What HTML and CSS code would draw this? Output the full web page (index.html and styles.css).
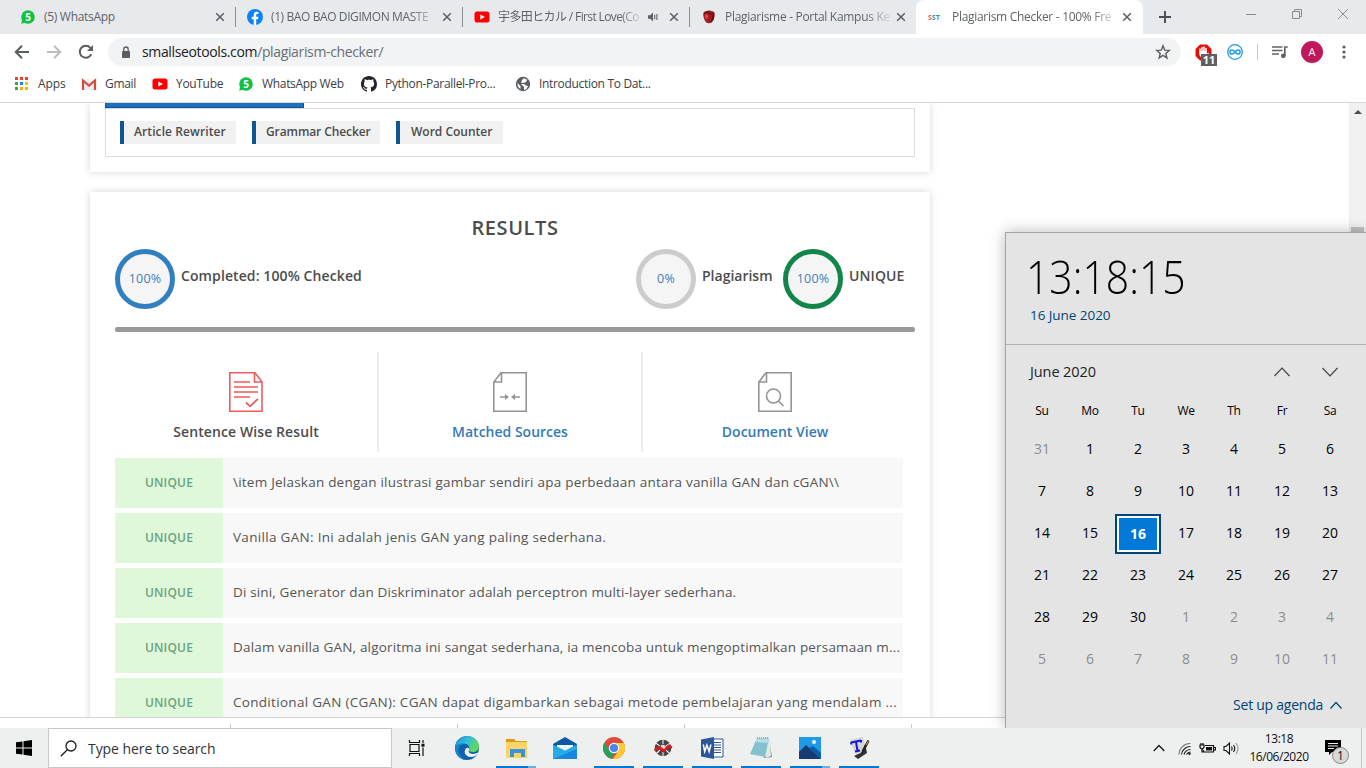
FILE: index.html
```html
<!DOCTYPE html>
<html lang="en">
<head>
<meta charset="utf-8">
<title>Plagiarism Checker - 100% Free</title>
<link rel="stylesheet" href="styles.css">
</head>
<body>
<div class="screen">
  <header class="tabstrip">
    <div class="tab">
      <svg class="fav" viewBox="0 0 16 16"><circle cx="8" cy="8" r="6.8" fill="#10c143"/><path d="M1.2 14.8l.9-4 3 3z" fill="#10c143"/><text x="8" y="12" text-anchor="middle" class="five">5</text></svg>
      <span class="tab-title whole">(5) WhatsApp</span>
      <svg class="close" viewBox="0 0 10 10"><path d="M1.2 1.2l7.6 7.6M8.8 1.2L1.2 8.8"/></svg>
    </div>
    <div class="tab">
      <svg class="fav" viewBox="0 0 16 16"><circle cx="8" cy="8" r="8" fill="#0a83f5"/><path d="M6.7 16v-5.8H4.7V7.7h2V6c0-2.1 1.2-3.2 3.1-3.2l1.7.15v2h-1c-1 0-1.3.6-1.3 1.2v1.5h2.2l-.4 2.5H9.2V16z" fill="#fff"/></svg>
      <span class="tab-title t2">(1) BAO BAO DIGIMON MASTE</span>
      <svg class="close" viewBox="0 0 10 10"><path d="M1.2 1.2l7.6 7.6M8.8 1.2L1.2 8.8"/></svg>
    </div>
    <div class="tab">
      <svg class="fav" viewBox="0 0 16 16"><rect x=".5" y="2.5" width="15" height="11" rx="2.5" fill="#f00"/><path d="M6.3 5.4v5.2L10.9 8z" fill="#fff"/></svg>
      <span class="tab-title t3">宇多田ヒカル / First Love(Co</span>
      <svg class="audio" viewBox="0 0 12 12"><path d="M1 4.2h2.2L6 1.6v8.8L3.200 7.800H1z" fill="#5f6368"/><path d="M7.700 3.800v4.400M9.900 3v6" stroke="#5f6368" stroke-width="1.100" fill="none"/></svg>
      <svg class="close" viewBox="0 0 10 10"><path d="M1.2 1.2l7.6 7.6M8.8 1.2L1.2 8.8"/></svg>
    </div>
    <div class="tab last">
      <svg class="fav" viewBox="0 0 16 16"><path d="M2.500 3.500C4 1 12 1 13.500 3.500c.8 3-.3 7-2.500 9.800-2 1.200-4 1.200-6 0C2.800 10.500 1.700 6.500 2.500 3.500z" fill="#a31c22"/><path d="M3 4.500c2-1.500 4-1 5 0s3.500 1 5-.5" stroke="#4b1013" fill="none"/><ellipse cx="5.500" cy="7.500" rx="1.600" ry="2.200" fill="#d9484b"/><path d="M12 6c.5 2-.3 5-2 6.800" stroke="#5e1015" stroke-width="1.500" fill="none"/><path d="M8 5V1.500" stroke="#5a1a12" stroke-width="1.200"/></svg>
      <span class="tab-title t4">Plagiarisme - Portal Kampus Ke</span>
      <svg class="close" viewBox="0 0 10 10"><path d="M1.2 1.2l7.6 7.6M8.8 1.2L1.2 8.8"/></svg>
    </div>
    <div class="tab active">
      <span class="fav sst"><b class="s1">S</b><b class="s2">S</b><b class="s3">T</b></span>
      <span class="tab-title t5">Plagiarism Checker - 100% Fre</span>
      <svg class="close" viewBox="0 0 10 10"><path d="M1.2 1.2l7.6 7.6M8.8 1.2L1.2 8.8"/></svg>
    </div>
    <svg class="newtab" viewBox="0 0 12 12"><path d="M6 0v12M0 6h12" stroke="#4a4d51" stroke-width="1.900"/></svg>
    <div class="winbtns">
      <svg width="12" height="12" viewBox="0 0 12 12"><path d="M1 6.500h10"/></svg>
      <svg width="12" height="12" viewBox="0 0 12 12"><path d="M1.500 3.500h7v7h-7zM3.500 3.500v-2h7v7h-2"/></svg>
      <svg width="12" height="12" viewBox="0 0 12 12"><path d="M1 1l10 10M11 1L1 11"/></svg>
    </div>
  </header>

  <div class="toolbar">
    <div class="nav">
      <svg width="16" height="16" viewBox="0 0 16 16"><path d="M15 8H2M8 1.800L1.800 8 8 14.200" stroke="#5a5d61" stroke-width="2" fill="none"/></svg>
      <svg width="16" height="16" viewBox="0 0 16 16"><path d="M1 8h13M8 1.800L14.200 8 8 14.200" stroke="#bcbec0" stroke-width="2" fill="none"/></svg>
      <svg width="16" height="16" viewBox="0 0 16 16"><path d="M13.300 10.200A6 6 0 1 1 12.400 3.800" stroke="#5a5d61" stroke-width="2" fill="none"/><path d="M15 1v6H9z" fill="#5a5d61"/></svg>
    </div>
    <div class="omnibox">
      <svg class="lock" width="10" height="13" viewBox="0 0 10 13"><rect x="1" y="5" width="8" height="7" rx="1" fill="#5a5d61"/><path d="M2.800 5V3.200a2.200 2.200 0 0 1 4.400 0V5" stroke="#5a5d61" stroke-width="1.300" fill="none"/></svg>
      <span class="url"><span class="host">smallseotools.com</span>/plagiarism-checker/</span>
      <svg class="star" width="16" height="16" viewBox="0 0 16 16"><path d="M8 1.800l1.700 4.300 4.600.3-3.500 3 1.100 4.500L8 11.400l-3.900 2.500 1.100-4.500-3.500-3 4.600-.3z" fill="none" stroke="#5a5d61" stroke-width="1.400"/></svg>
    </div>
    <div class="extensions">
      <div class="blocker">
        <svg width="17" height="17" viewBox="0 0 17 17"><path d="M5 .5h7l4.500 4.500v7L12 16.500H5L.5 12V5z" fill="#e60c0c"/><path d="M5 8V5M7 8V3.500M9 8V3M11 8V4.500" stroke="#fff" stroke-width="1.500" stroke-linecap="round"/><path d="M4.300 7h7.500v3l1.500-1.500.6.8L11 14H7c-1.700-1-2.700-3-2.700-4z" fill="#fff"/></svg>
        <span class="count">11</span>
      </div>
      <svg class="loop" width="16" height="16" viewBox="0 0 16 16"><circle cx="8" cy="8" r="7.300" fill="#fff" stroke="#1e9cea" stroke-width="1.300"/><path d="M8 8C6.800 6.400 6 5.900 5 5.900a2.100 2.100 0 0 0 0 4.200c1 0 1.800-.5 3-2.100s2-2.100 3-2.100a2.100 2.100 0 0 1 0 4.200c-1 0-1.800-.5-3-2.100z" fill="none" stroke="#1e9cea" stroke-width="1.500"/></svg>
      <i class="sep"></i>
      <svg class="queue" width="16" height="14" viewBox="0 0 16 14"><path d="M0 2h10.500M0 5.500h10.500M0 9h7" stroke="#5f6368" stroke-width="1.700"/><path d="M12.800 11V2h3" stroke="#5f6368" stroke-width="1.700" fill="none"/><circle cx="11.300" cy="10.800" r="2.400" fill="#5f6368"/></svg>
      <span class="avatar">A</span>
      <svg class="dots" width="4" height="14" viewBox="0 0 4 14"><g fill="#5a5d61"><circle cx="2" cy="2" r="1.600"/><circle cx="2" cy="7" r="1.600"/><circle cx="2" cy="12" r="1.600"/></g></svg>
    </div>
  </div>

  <nav class="bookmarks">
    <div class="bm b1"><svg viewBox="0 0 16 16"><g><path d="M1 1h3v3H1zM6 1h3v3H6zM11 1h3v3h-3z" fill="#e94235"/><path d="M1 6h3v3H1z" fill="#34a853"/><path d="M6 6h3v3H6z" fill="#1e88e5"/><path d="M11 6h3v3h-3z" fill="#fbbc04"/><path d="M1 11h3v3H1z" fill="#34a853"/><path d="M6 11h3v3H6zM11 11h3v3h-3z" fill="#fbb004"/></g></svg><span>Apps</span></div>
    <div class="bm b2"><svg viewBox="0 0 16 16"><path d="M1 3h14v11H1z" fill="#eceff1"/><path d="M2 14V4.500l6 5 6-5V14" fill="none" stroke="#d54b3d" stroke-width="2.200"/><path d="M3 3h10L8 7.500z" fill="#f3f3f3"/></svg><span>Gmail</span></div>
    <div class="bm b3"><svg viewBox="0 0 16 16"><rect x=".5" y="2.500" width="15" height="11" rx="2.500" fill="#f00"/><path d="M6.300 5.400v5.200L10.900 8z" fill="#fff"/></svg><span>YouTube</span></div>
    <div class="bm b4"><svg viewBox="0 0 16 16"><circle cx="8" cy="8" r="6.800" fill="#10c143"/><path d="M1.200 14.800l.9-4 3 3z" fill="#10c143"/><text x="8" y="12" text-anchor="middle" class="five">5</text></svg><span>WhatsApp Web</span></div>
    <div class="bm b5"><svg viewBox="0 0 16 16"><path fill="#20262c" d="M8 0C3.580 0 0 3.580 0 8c0 3.540 2.290 6.530 5.470 7.590.4.070.55-.17.55-.38 0-.19-.01-.82-.01-1.490-2.010.37-2.530-.49-2.690-.94-.09-.23-.48-.94-.82-1.130-.28-.15-.68-.52-.01-.53.63-.01 1.080.58 1.230.82.720 1.210 1.870.87 2.330.66.070-.52.280-.87.510-1.070-1.780-.2-3.640-.89-3.640-3.950 0-.87.310-1.590.82-2.150-.08-.2-.36-1.020.08-2.120 0 0 .67-.21 2.200.82.640-.18 1.320-.27 2-.27s1.360.09 2 .27c1.530-1.040 2.200-.82 2.200-.82.440 1.100.16 1.920.08 2.120.51.560.82 1.270.82 2.150 0 3.070-1.870 3.750-3.650 3.950.29.250.54.730.54 1.480 0 1.070-.01 1.930-.01 2.200 0 .21.150.46.550.38A8.010 8.010 0 0 0 16 8c0-4.420-3.580-8-8-8z"/></svg><span>Python-Parallel-Pro...</span></div>
    <div class="bm b6"><svg viewBox="0 0 16 16"><circle cx="8" cy="8" r="7.200" fill="#5a5d61"/><path d="M2.500 7l3 3v3c-2-1-3.300-3-3-6zM8.500 2.300l3.800 1.500-1.500 2.400L8 7 6 6.500l1-2.200zM6 8h3l2 1.500 2 .5-1.500 3-2.500 1V11z" fill="#fff"/></svg><span>Introduction To Dat...</span></div>
  </nav>

  <div class="viewport">
    <main class="page">
      <section class="card tools">
        <div class="blue-tab"></div>
        <div class="tool-box">
          <a class="chip c1">Article Rewriter</a>
          <a class="chip c2">Grammar Checker</a>
          <a class="chip c3">Word Counter</a>
        </div>
      </section>
      <section class="card results">
        <h2>RESULTS</h2>
        <div class="meters">
          <span class="ring blue">100%</span><span class="meter-label m1">Completed: 100% Checked</span>
          <span class="ring grey">0%</span><span class="meter-label m2">Plagiarism</span>
          <span class="ring green">100%</span><span class="meter-label m3">UNIQUE</span>
        </div>
        <div class="progress"></div>
        <div class="views">
          <div class="view current">
            <svg width="36" height="42" viewBox="0 0 36 42" fill="none" stroke="#f05b5b" stroke-width="1.600"><path d="M1.800 1.800H27l7 9.200v29.200H1.800zM26.500 2v9H34"/><path d="M6 11h16M6 16h24M6 21h24M6 26h16" stroke-width="1.700"/><path d="M18 31.500l4 3.800 8-7.500" stroke-width="1.800"/></svg>
            <span>Sentence Wise Result</span>
          </div>
          <div class="view link">
            <svg width="36" height="42" viewBox="0 0 36 42" fill="none" stroke="#949494" stroke-width="1.600"><path d="M34.200 1.800H9L1.800 11v29.200h32.400zM9.500 2v9H2"/><path d="M8 26h7M28 26h-7" stroke-width="1.500"/><path d="M13 23l4 3-4 3zM23 23l-4 3 4 3z" fill="#949494" stroke="none"/></svg>
            <span>Matched Sources</span>
          </div>
          <div class="view link">
            <svg width="36" height="42" viewBox="0 0 36 42" fill="none" stroke="#949494" stroke-width="1.600"><path d="M34.200 1.800H9L1.800 11v29.200h32.400zM9.500 2v9H2"/><circle cx="16.500" cy="25" r="7"/><path d="M21.500 30l5 5"/></svg>
            <span>Document View</span>
          </div>
        </div>
        <div class="rows">
          <div class="row"><b>UNIQUE</b><p class="r1">\item Jelaskan dengan ilustrasi gambar sendiri apa perbedaan antara vanilla GAN dan cGAN\\</p></div>
          <div class="row"><b>UNIQUE</b><p class="r2">Vanilla GAN: Ini adalah jenis GAN yang paling sederhana.</p></div>
          <div class="row"><b>UNIQUE</b><p class="r3">Di sini, Generator dan Diskriminator adalah perceptron multi-layer sederhana.</p></div>
          <div class="row"><b>UNIQUE</b><p class="r4">Dalam vanilla GAN, algoritma ini sangat sederhana, ia mencoba untuk mengoptimalkan persamaan m...</p></div>
          <div class="row"><b>UNIQUE</b><p class="r5">Conditional GAN (CGAN): CGAN dapat digambarkan sebagai metode pembelajaran yang mendalam ...</p></div>
        </div>
      </section>
    </main>
    <div class="scrollbar">
      <svg width="17" height="17" viewBox="0 0 17 17"><path d="M5 11h8L9 7z" fill="#4d4d4d"/></svg>
      <div class="thumb"></div>
    </div>
  </div>

  <div class="downloads"><i></i><i></i><i></i><i></i></div>

  <footer class="taskbar">
    <div class="start"><svg width="16" height="16" viewBox="0 0 16 16"><path d="M0 2.300L6.500 1.400v6.100H0zM7.500 1.200L16 0v7.500H7.500zM0 8.500h6.500v6.100L0 13.700zM7.500 8.500H16V16l-8.500-1.200z"/></svg></div>
    <div class="search"><svg width="17" height="17" viewBox="0 0 17 17" fill="none" stroke="#1c1c1c" stroke-width="1.300"><circle cx="11" cy="6" r="5"/><path d="M7.300 9.700L.8 16.200"/></svg><span>Type here to search</span></div>
    <div class="apps">
      <div class="app view-btn"><svg width="18" height="16" viewBox="0 0 18 16" fill="none" stroke="#111" stroke-width="1.200"><path d="M2 4.500h9v7H2zM1.500 0v2.500h10V0M1.500 16v-2.500h10V16M15 0v3M15 7.500V16"/><path d="M13.500 3.700h3v3h-3z" fill="#111" stroke="none"/></svg></div>
      <div class="app"><svg width="24" height="24" viewBox="0 0 24 24"><defs><linearGradient id="ea" x1="0" y1="0" x2="1" y2=".5"><stop offset="0" stop-color="#1a83d2"/><stop offset=".5" stop-color="#32bddd"/><stop offset="1" stop-color="#65d957"/></linearGradient></defs><circle cx="12" cy="12" r="12" fill="#0e62ad"/><path d="M0 11C1 4 6 0 12 0c7 0 12 5 12 10.500C24 14 21 16 18 16c-3 0-4.500-.8-4-2 1.500-3-1-6.500-5-6.500C5 7.500 1.500 9 0 11z" fill="url(#ea)"/><path d="M9 8c-4 .5-6 4-5.500 7.500C4.500 20 8 23.500 12 24c-6 .5-12-5-12-12 2-4 6-5 9-4z" fill="#1685d1"/><path d="M14 14c-1.500 2.500 2 5 6.500 3.500 1.300-.4 2.500-1 3-1-1.500 3-4.500 4.500-8 4.500-5 0-7.500-5.500-4.500-8.500 1.200-1.300 3.500-.5 3 1.500z" fill="#edf2f4"/></svg></div>
      <div class="app open multi"><svg width="24" height="24" viewBox="0 0 24 24"><path d="M2 3h8l2 2h11v6H2z" fill="#d99a14"/><path d="M2 6h21v16H2z" fill="#fcd365"/><path d="M6 21v-8h15v8h-4v-4h-7v4z" fill="#3594dc"/></svg></div>
      <div class="app"><svg width="24" height="24" viewBox="0 0 24 24"><path d="M0 8l12-7 12 7v7H0z" fill="#0b5aa8"/><path d="M4 9h16v8H4z" fill="#f3fafd"/><path d="M0 8.500l12 6 12-6V23H0z" fill="#28a9e8"/><path d="M0 23l24-10v10z" fill="#1788dc"/></svg></div>
      <div class="app open"><svg width="22" height="22" viewBox="0 0 22 22"><circle cx="11" cy="11" r="11" fill="#e04a3c"/><path d="M1.500 5.500L6.500 14l4.500 2-2.500 5.700A11 11 0 0 1 1.500 5.500z" fill="#23a25b"/><path d="M11 6h9.800A11 11 0 0 1 10 22l5.500-8.500C17 11 15 6 11 6z" fill="#fbc934"/><circle cx="11" cy="11" r="5.200" fill="#fff"/><circle cx="11" cy="11" r="4.100" fill="#4687ee"/></svg></div>
      <div class="app open"><svg width="20" height="20" viewBox="0 0 20 20"><circle cx="10" cy="10" r="8.300" fill="#434547"/><path d="M10 6V0M13 8l6-4M13 12l5 5M10 14v6M7 12l-5 5M7 8L1 4" stroke="#f1f1f1" stroke-width="1.100"/><circle cx="10" cy="9.500" r="2.800" fill="#dcdcdc"/><path d="M1.500 12.500l5-3.500 4.500 4 4.500-5 3.500 1.500" fill="none" stroke="#f01018" stroke-width="2.400"/></svg></div>
      <div class="app open"><svg width="24" height="24" viewBox="0 0 24 24"><path d="M12 3h11v18H12z" fill="#fff" stroke="#2b5899"/><path d="M14 6.500h7M14 9h7M14 11.500h7M14 14h7M14 16.500h7" stroke="#2b5899"/><path d="M1 3.500L14 1v22L1 20.500z" fill="#2b579a"/><path d="M3.300 8.500l1.400 7 2.200-6.500 2.200 6.500 1.800-7" fill="none" stroke="#fff" stroke-width="1.500"/></svg></div>
      <div class="app open"><svg width="24" height="24" viewBox="0 0 24 24"><path d="M20 3l3 18-8 1z" fill="#8c8151"/><path d="M8 2l13-1 1 19-5 2z" fill="#dce9eb"/><path d="M8 2h12l-4 19L1 18z" fill="#83c1ce"/><path d="M8 2h12l-1 5-13-1z" fill="#b5dee4"/><path d="M8 2h12" stroke="#678" stroke-dasharray="1 1"/></svg></div>
      <div class="app open multi"><svg width="22" height="22" viewBox="0 0 22 22"><path d="M0 0h22v22H0z" fill="#2199e9"/><path d="M0 15l7-7 15 14H0z" fill="#173a73"/><path d="M10 11l4-2 8 7v6z" fill="#0e5aaa"/><circle cx="15" cy="5" r="2" fill="#eaf8ff"/></svg></div>
      <div class="app open"><svg width="24" height="24" viewBox="0 0 24 24"><path d="M3 4l13-3 4 16-10 5z" fill="#d5d5d7"/><path d="M18 8l2 9-9 6-4-3 9-4z" fill="#333"/><path d="M4 6.500l10-2M9 5.500l1.500 9.500M8 15.500l5-1M4.300 6v2.500M14 4v2.500" stroke="#1517d8" stroke-width="2"/><path d="M22 5l-5 10-2.500 3 1-4 5.500-10z" fill="#242424" stroke="#222"/><path d="M22 4l-3 5" stroke="#c8a030" stroke-width="1"/></svg></div>
    </div>
    <div class="tray">
      <svg class="up" width="12" height="8" viewBox="0 0 12 8" fill="none" stroke="#1c1c1c" stroke-width="1.400"><path d="M.7 7L6 1.500 11.300 7"/></svg>
      <svg class="wifi" width="13" height="13" viewBox="0 0 13 13" fill="none" stroke="#222" stroke-width="1.100"><path d="M1 12.500A11 11 0 0 1 12.500 1.500" stroke="#777"/><path d="M3.500 12.500A9 9 0 0 1 12.500 4.500M6 12.500a7 7 0 0 1 6.500-5M8.500 12.500a5 5 0 0 1 4-2.500"/><circle cx="11.500" cy="11.800" r="1.200" fill="#222" stroke="none"/></svg>
      <svg class="bat" width="17" height="13" viewBox="0 0 17 13" fill="none" stroke="#111" stroke-width="1.200"><path d="M6 3.500h8.500v6.500H4.500V8M15 5.500h1.500V8H15M1 3h4v2.500L3 7.500 1 5.500zM2 3V1M4 3V1M3 7.500V10h2"/><path d="M7 5h6v3.500H7z" fill="#111" stroke="none"/></svg>
      <svg class="vol" width="17" height="13" viewBox="0 0 17 13" fill="none" stroke="#111" stroke-width="1.100"><path d="M1 4.500h2l3.500-3.500v11L3 8.500H1zM8.500 4.500q1.200 2 0 4M10.500 3q2.500 3.500 0 7"/><path d="M13 1q4 5.500 0 11" stroke="#999"/></svg>
      <div class="clock"><span>13:18</span><span>16/06/2020</span></div>
      <div class="notice"><svg width="16" height="16" viewBox="0 0 16 16"><path d="M0 0h16v12H7l-3 3v-3H0z" fill="#000"/><path d="M3 3.500h10M3 6h10M3 8.500h6" stroke="#eee" stroke-width="1.100"/></svg><span class="badge">1</span></div>
      <i class="desk"></i>
    </div>
  </footer>

  <aside class="calendar">
    <div class="cal-top">
      <div class="time">13:18:15</div>
      <div class="date">16 June 2020</div>
    </div>
    <div class="cal-head">
      <span>June 2020</span>
      <svg width="16" height="10" viewBox="0 0 16 10"><path d="M.5 9L8 1.200 15.500 9"/></svg>
      <svg width="16" height="10" viewBox="0 0 16 10"><path d="M.5 1L8 8.800 15.500 1"/></svg>
    </div>
    <div class="week"><span>Su</span><span>Mo</span><span>Tu</span><span>We</span><span>Th</span><span>Fr</span><span>Sa</span></div>
    <div class="days">
      <span class="off">31</span><span>1</span><span>2</span><span>3</span><span>4</span><span>5</span><span>6</span>
      <span>7</span><span>8</span><span>9</span><span>10</span><span>11</span><span>12</span><span>13</span>
      <span>14</span><span>15</span><span class="today">16</span><span>17</span><span>18</span><span>19</span><span>20</span>
      <span>21</span><span>22</span><span>23</span><span>24</span><span>25</span><span>26</span><span>27</span>
      <span>28</span><span>29</span><span>30</span><span class="off">1</span><span class="off">2</span><span class="off">3</span><span class="off">4</span>
      <span class="off">5</span><span class="off">6</span><span class="off">7</span><span class="off">8</span><span class="off">9</span><span class="off">10</span><span class="off">11</span>
    </div>
    <div class="agenda"><span>Set up agenda</span><svg width="12" height="8" viewBox="0 0 12 8"><path d="M.5 7.500L6 1.500l5.500 6"/></svg></div>
  </aside>
</div>
</body>
</html>
```
FILE: styles.css
```css
* { box-sizing: border-box; }
body { margin: 0; font-family: "Open Sans", "Noto Sans", "Noto Sans CJK JP", sans-serif; font-size: 12px; }
svg { display: block; flex: none; }
.screen { position: relative; width: 1366px; height: 768px; overflow: hidden; display: flex; flex-direction: column; background: #fff; }

/* Tab strip */
.tabstrip { height: 34px; flex: none; display: flex; align-items: stretch; padding-left: 8px; background: #e7eaed; }
.tab { position: relative; width: 227px; display: flex; align-items: center; padding: 0 10px 0 12px; color: #5f6368; }
.tab::after { content: ""; position: absolute; right: -1px; top: 7px; width: 1px; height: 20px; background: #8b8e92; }
.tab.last::after, .tab.active::after { display: none; }
.tab.active { background: #fff; border-radius: 8px 8px 0 0; padding-right: 11px; }
.fav { width: 16px; height: 16px; flex: none; }
.five { font: bold 10px "Open Sans", sans-serif; fill: #fff; }
.tab-title { flex: 1; min-width: 0; margin: 0 5px 0 8px; white-space: nowrap; line-height: 18px; letter-spacing: -.3px; -webkit-mask-image: linear-gradient(to right, #000 84%, transparent 102%); mask-image: linear-gradient(to right, #000 84%, transparent 102%); }
.tab-title.whole { -webkit-mask-image: none; mask-image: none; }
.t2 { letter-spacing: -.4px; }
.t3 { letter-spacing: -.62px; }
.close { width: 10px; height: 10px; }
.close path { stroke: #5a5d61; stroke-width: 1.5; }
.audio { width: 12px; height: 12px; margin-right: 10px; }
.sst { display: flex; align-items: center; font-size: 7px; letter-spacing: 0; }
.s1 { color: #ee5a5a; } .s2 { color: #3a8fd0; } .s3 { color: #33a06f; }
.newtab { width: 12px; height: 12px; margin: 11px 0 0 16px; }
.winbtns { margin-left: auto; display: flex; gap: 34px; padding: 8px 17px 0 0; }
.winbtns path { fill: none; stroke: #8a8c8f; stroke-width: 1; }

/* Toolbar */
.toolbar { height: 36px; flex: none; display: flex; align-items: center; background: #fff; }
.nav { display: flex; gap: 16px; padding-left: 14px; width: 108px; }
.omnibox { width: 1073px; height: 28px; border-radius: 14px; background: #f1f3f4; display: flex; align-items: center; padding: 0 10px 0 13px; }
.url { margin-left: 11px; font-size: 14px; color: #6a6e73; flex: 1; letter-spacing: -.36px; line-height: 20px; }
.host { color: #202124; }
.extensions { display: flex; align-items: center; padding-left: 14px; }
.blocker { position: relative; width: 17px; height: 17px; }
.count { position: absolute; left: 6px; top: 10px; width: 16px; height: 12px; background: #5f6062; color: #fff; font-weight: 700; font-size: 11px; line-height: 12px; text-align: center; }
.loop { margin-left: 15px; }
.sep { width: 1px; height: 16px; background: #c6c8ca; margin-left: 14px; }
.queue { margin-left: 14px; }
.avatar { width: 22px; height: 22px; margin-left: 13px; border-radius: 50%; background: #c2185b; color: #fff; text-align: center; line-height: 22px; font-size: 11px; }
.dots { margin-left: 19px; }

/* Bookmarks */
.bookmarks { height: 33px; flex: none; display: flex; align-items: center; padding: 0 0 4px 14px; border-bottom: 1px solid #d5d7d9; color: #3c4043; letter-spacing: -.32px; }
.bm { display: flex; align-items: center; gap: 8px; white-space: nowrap; line-height: 16px; }
.bm svg { width: 16px; height: 16px; }
.b1 { width: 67px; letter-spacing: -.1px; } .b2 { width: 71px; } .b3 { width: 86px; } .b4 { width: 123px; } .b5 { width: 154px; }

/* Web page */
.viewport { height: 614px; flex: none; display: flex; overflow: hidden; }
.page { flex: 1; height: 614px; overflow: hidden; padding-left: 90px; color: #4c4c4c; letter-spacing: .2px; }
.card { width: 840px; background: #fff; box-shadow: 0 0 8px rgba(0, 0, 0, .16); }
.tools { height: 69px; padding: 0 15px; margin-bottom: 20px; }
.blue-tab { width: 199px; height: 5px; background: #1d70bd; border: 1px solid #11528f; border-top: 0; }
.tool-box { height: 49px; border: 1px solid #ddd; display: flex; gap: 16px; padding: 12px 14px; }
.chip { height: 23px; border-left: 4px solid #0d5595; background: #f1f1f1; padding-left: 10px; font-size: 12px; line-height: 22px; font-weight: 600; white-space: nowrap; letter-spacing: .1px; }
.c1 { width: 116px; } .c2 { width: 128px; letter-spacing: -.1px; } .c3 { width: 107px; padding-left: 11px; letter-spacing: 0; }
.results { height: 600px; padding: 0 15px 0 25px; }
.results h2 { margin: 0; padding: 23px 0 0; font-size: 20px; line-height: 25px; font-weight: 600; text-align: center; height: 57px; letter-spacing: .6px; }
.meters { height: 60px; display: flex; }
.ring { width: 60px; height: 60px; border-radius: 50%; border: 5px solid; background: #f5f5f5; line-height: 50px; font-size: 12.5px; text-align: center; letter-spacing: .2px; }
.ring { color: #3f7dbb; }
.ring.blue { border-color: #307fc1; }
.ring.grey { border-color: #ccc; }
.ring.green { border-color: #12854b; }
.meter-label { font-size: 14px; font-weight: 600; line-height: 21px; padding: 16px 0 0 6px; white-space: nowrap; letter-spacing: .1px; }
.m1 { width: 461px; } .m2 { width: 87px; letter-spacing: 0; }
.progress { height: 5px; margin-top: 18px; background: #999; border-radius: 2px; }
.views { height: 100px; margin-top: 20px; display: flex; width: 790px; }
.view { width: 264px; flex: none; display: flex; flex-direction: column; align-items: center; padding-top: 19px; border-right: 2px solid #ececec; font-size: 14px; font-weight: 600; letter-spacing: .1px; }
.view:last-child { border-right: 0; }
.view span { line-height: 21px; margin-top: 8px; }
.link { color: #337ab7; letter-spacing: 0; }
.rows { margin-top: 6px; display: flex; flex-direction: column; gap: 5px; width: 788px; }
.row { height: 50px; display: flex; background: #f8f8f8; line-height: 48px; }
.row b { width: 108px; flex: none; background: #e0f8da; color: #68a481; text-align: center; font-weight: 600; font-size: 12px; line-height: 50px; }
.row p { margin: 0; padding-left: 10px; font-size: 13.5px; white-space: nowrap; color: #555; }
.row .r1 { letter-spacing: .23px; }
.row .r2 { letter-spacing: .31px; }
.row .r3 { letter-spacing: .15px; }
.row .r4 { letter-spacing: .18px; }
.row .r5 { letter-spacing: .3px; }
.scrollbar { width: 17px; background: #f1f1f1; }
.thumb { width: 13px; height: 90px; margin: 107px auto 0; background: #c1c1c1; }
.downloads { height: 11px; flex: none; border-top: 1px solid #d5d5d5; background: #fff; display: flex; padding-left: 4px; }
.downloads i { width: 227px; height: 4px; margin-top: 6px; border-right: 1px solid #c8c8c8; }

/* Taskbar */
.taskbar { height: 40px; flex: none; display: flex; background: #eeefef; }
.start { width: 48px; display: flex; align-items: center; justify-content: center; }
.search { width: 344px; border: 1px solid #c8c8c8; background: #fff; display: flex; align-items: center; padding-left: 11px; gap: 11px; font-size: 14px; color: #333; letter-spacing: -.07px; }
.apps { display: flex; padding-left: 1px; }
.app { position: relative; width: 49px; display: flex; align-items: center; justify-content: center; }
.view-btn { padding-right: 2px; }
.open::after { content: ""; position: absolute; left: 5px; right: 4px; bottom: 0; height: 2px; background: #0078d7; }
.multi::after { background: linear-gradient(to right, #0078d7 32px, #66aee6 32px); }
.tray { margin-left: auto; display: flex; align-items: center; color: #111; }
.wifi { margin-left: 13px; } .bat { margin-left: 8px; } .vol { margin-left: 7px; }
.clock { width: 60px; margin-left: 9px; display: flex; flex-direction: column; align-items: center; line-height: 18px; font-size: 12px; white-space: nowrap; letter-spacing: -.45px; }
.notice { position: relative; margin-left: 16px; width: 16px; height: 16px; }
.badge { position: absolute; left: 7px; top: 7px; width: 17px; height: 17px; border: 1px solid #888; border-radius: 50%; background: #d8d8d8; font-size: 12px; line-height: 15px; text-align: center; }
.desk { width: 1px; height: 40px; margin: 0 4px 0 20px; background: #c8c8c8; }

/* Clock and calendar flyout */
.calendar { position: absolute; left: 1005px; top: 232px; width: 361px; height: 496px; background: #e4e4e4; border: 1px solid #a3a3a3; border-width: 1px 0 0 1px; box-shadow: 0 0 14px rgba(0, 0, 0, .28); clip-path: inset(-16px 0 0 -16px); }
.cal-top { height: 112px; border-bottom: 1px solid #b2b2b2; padding: 12px 0 0 24px; }
.time { height: 60px; line-height: 62px; font-size: 46px; font-weight: 300; transform: scaleX(.89); transform-origin: left; color: #000; margin-left: -4px; width: 190px; }
.date { font-size: 13.5px; line-height: 20px; color: #004578; letter-spacing: -.05px; }
.cal-head { height: 52px; display: flex; align-items: center; padding: 1px 28px 0 24px; font-size: 14.5px; color: #222; }
.cal-head span { flex: 1; letter-spacing: -.1px; }
.cal-head svg + svg { margin-left: 32px; }
.cal-head path, .agenda path { fill: none; stroke: #444; stroke-width: 1.2; }
.week, .days { display: grid; grid-template-columns: repeat(7, 48px); margin-left: 12px; text-align: center; color: #000; }
.week { line-height: 28px; height: 31px; font-size: 12px; letter-spacing: -.3px; }
.days { grid-auto-rows: 42px; font-size: 14px; line-height: 42px; }
.off { color: #8d8d8d; }
.today { width: 46px; height: 40px; margin: 2px 1px 0; border: 2px solid #004578; box-shadow: inset 0 0 0 2px #fff; background: #0078d7; color: #fff; font-weight: 700; line-height: 35px; }
.agenda { display: flex; align-items: center; justify-content: flex-end; gap: 7px; padding: 15px 24px 0 0; font-size: 14px; line-height: 20px; color: #004578; letter-spacing: -.25px; }
.agenda path { stroke: #004578; }
```
